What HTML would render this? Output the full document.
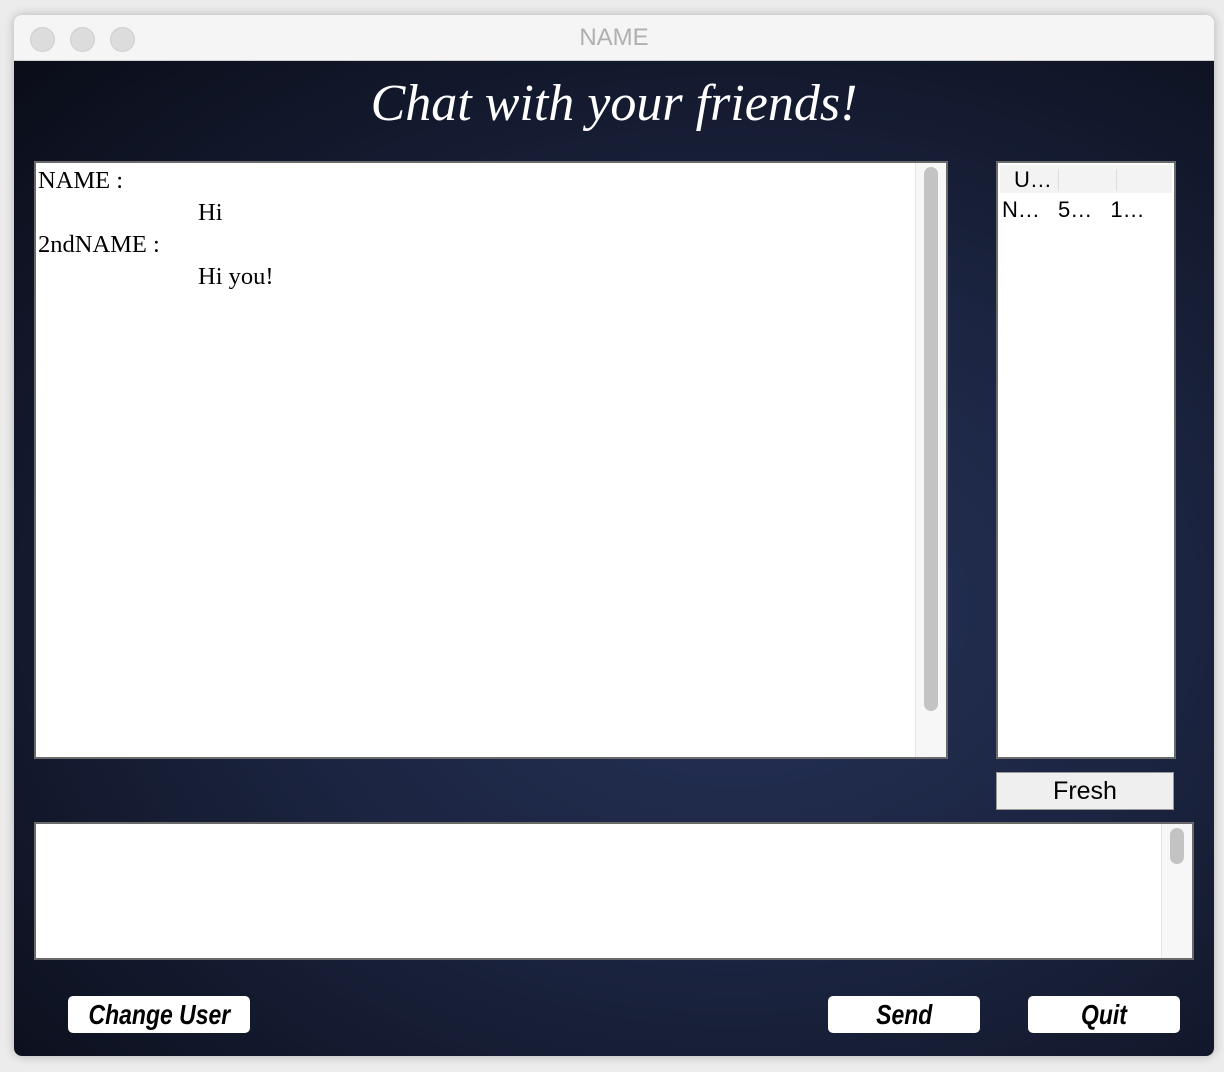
<!DOCTYPE html>
<html><head><style>
body{margin:0;width:1224px;height:1072px;background:#ececec;position:relative;overflow:hidden;font-family:"Liberation Sans",sans-serif}
.win{position:absolute;left:14px;top:15px;width:1200px;height:1041px;border-radius:8px;overflow:hidden;box-shadow:0 0 10px rgba(0,0,0,.25)}
.tb{height:45px;background:#f5f5f5;border-bottom:1px solid #d0d0d0;position:relative;text-align:center;line-height:46px;color:#b0b0b0;font-size:24px}
.dot{position:absolute;top:12px;width:23px;height:23px;border-radius:50%;background:#dcdcdc;border:1px solid #cfcfcf}
.bg{position:absolute;top:46px;left:0;right:0;bottom:0;background:radial-gradient(ellipse at 60% 55%,#26335a 0%,#1b2440 45%,#0a0d18 100%)}
.a{position:absolute}
.title{left:0;width:1200px;top:13px;text-align:center;color:#fff;font:italic 52px "Liberation Serif",serif}
.box{background:#fff;border:2px solid #6a6a6a}
.ser{font:24.5px "Liberation Serif",serif;color:#000;line-height:32px}
.btn{background:#fff;border-radius:5px;text-align:center;font:italic bold 28px "Liberation Sans",sans-serif;line-height:37px;color:#000}
.btn span{display:inline-block;transform:scaleX(.82)}
</style></head><body>
<div class="win">
<div class="tb">NAME<div class="dot" style="left:16px"></div><div class="dot" style="left:56px"></div><div class="dot" style="left:96px"></div></div>
<div class="bg">
<div class="a title">Chat with your friends!</div>
<div class="a box" style="left:20px;top:100px;width:910px;height:594px">
<div class="a ser" style="left:2px;top:2px">NAME :<br><span style="padding-left:160px">Hi</span><br>2ndNAME :<br><span style="padding-left:160px">Hi you!</span></div>
<div class="a" style="right:0;top:0;width:30px;height:594px;background:#f7f7f7;border-left:1px solid #e4e4e4"></div>
<div class="a" style="right:8px;top:4px;width:14px;height:544px;background:#c3c3c3;border-radius:7px"></div>
</div>
<div class="a box" style="left:982px;top:100px;width:176px;height:594px">
<div class="a" style="left:2px;top:2px;width:172px;height:28px;background:#f3f3f3;font-size:22px;line-height:30px"><span style="position:absolute;left:14px">U…</span><span style="position:absolute;left:58px;top:4px;height:22px;border-left:1px solid #ddd"></span><span style="position:absolute;left:116px;top:4px;height:22px;border-left:1px solid #ddd"></span></div>
<div class="a" style="left:4px;top:34px;font-size:22px;word-spacing:12px">N… 5… 1…</div>
</div>
<div class="a" style="left:982px;top:711px;width:176px;height:36px;background:#efefef;border:1px solid #999;text-align:center;font-size:25px;line-height:36px">Fresh</div>
<div class="a box" style="left:20px;top:761px;width:1156px;height:134px">
<div class="a" style="right:0;top:0;width:30px;height:134px;background:#f7f7f7;border-left:1px solid #e4e4e4"></div>
<div class="a" style="right:8px;top:4px;width:14px;height:36px;background:#c3c3c3;border-radius:7px"></div>
</div>
<div class="a btn" style="left:54px;top:935px;width:182px;height:37px"><span>Change User</span></div>
<div class="a btn" style="left:814px;top:935px;width:152px;height:37px"><span>Send</span></div>
<div class="a btn" style="left:1014px;top:935px;width:152px;height:37px"><span>Quit</span></div>
</div></div>
</body></html>
